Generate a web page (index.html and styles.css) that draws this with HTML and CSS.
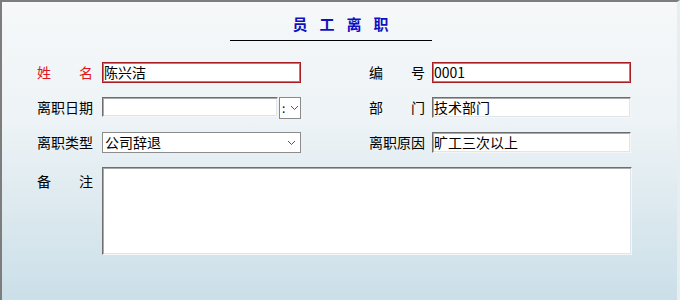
FILE: index.html
```html
<!DOCTYPE html>
<html lang="zh-CN">
<head>
    <meta charset="UTF-8">
    <title>员工离职</title>
    <link rel="stylesheet" href="styles.css">
</head>
<body>
    <div class="window">
        <div class="title">员工离职</div>
        <div class="title-line"></div>

        <div class="form">
            <div class="row">
                <div class="field field-left">
                    <label class="lbl must">姓名</label>
                    <div class="box box-red">陈兴洁</div>
                </div>
                <div class="field field-right">
                    <label class="lbl">编号</label>
                    <div class="box box-red">0001</div>
                </div>
            </div>

            <div class="row">
                <div class="field field-left">
                    <label class="lbl">离职日期</label>
                    <div class="box box-inset date-box"></div>
                    <div class="date-btn">
                        <span class="colon">:</span>
                        <svg width="9" height="6" viewBox="0 0 9 6"><path d="M1 1 L4.5 4.5 L8 1" fill="none" stroke="#555" stroke-width="1"/></svg>
                    </div>
                </div>
                <div class="field field-right">
                    <label class="lbl">部门</label>
                    <div class="box box-inset">技术部门</div>
                </div>
            </div>

            <div class="row">
                <div class="field field-left">
                    <label class="lbl">离职类型</label>
                    <div class="box box-select">
                        <span>公司辞退</span>
                        <svg width="9" height="6" viewBox="0 0 9 6"><path d="M1 1 L4.5 4.5 L8 1" fill="none" stroke="#555" stroke-width="1"/></svg>
                    </div>
                </div>
                <div class="field field-right">
                    <label class="lbl">离职原因</label>
                    <div class="box box-inset">旷工三次以上</div>
                </div>
            </div>

            <div class="row row-memo">
                <label class="lbl lbl-memo">备注</label>
                <div class="box box-inset memo"></div>
            </div>
        </div>
    </div>
</body>
</html>
```

FILE: styles.css
```css
* {
    margin: 0;
    padding: 0;
    box-sizing: border-box;
}

body {
    font-family: "Noto Sans CJK SC", "Liberation Sans", sans-serif;
    font-size: 14px;
    color: #000;
}

.window {
    width: 680px;
    height: 300px;
    border-top: 2px solid #7d7d7d;
    border-left: 2px solid #7d7d7d;
    border-right: 3px solid #e6eef1;
    background: linear-gradient(#f6f8f9 0%, #edf3f6 40%, #cbdfe8 100%);
}

.title {
    padding-top: 12px;
    padding-left: 14px;
    height: 32px;
    line-height: 20px;
    text-align: center;
    font-size: 15px;
    font-weight: bold;
    letter-spacing: 12px;
    color: #1010c0;
}

.title-line {
    width: 202px;
    height: 7px;
    margin-left: 228px;
    border-bottom: 1px solid #000;
}

.form {
    padding-top: 21px;
    padding-left: 35px;
}

.row {
    display: flex;
    height: 21px;
    margin-bottom: 14px;
}

.field {
    display: flex;
    align-items: flex-start;
    flex-shrink: 0;
}

.field-left {
    width: 264px;
}

.field-right {
    margin-left: 68px;
}

.lbl {
    flex-shrink: 0;
    width: 56px;
    line-height: 21px;
    white-space: nowrap;
    text-align: justify;
    text-align-last: justify;
    margin-right: 9px;
}

.field-right .lbl {
    margin-right: 7px;
}

.must {
    color: #e0141c;
}

.box {
    flex-shrink: 0;
    width: 199px;
    height: 21px;
    line-height: 19px;
    padding-left: 2px;
    background: #fff;
    white-space: nowrap;
}

.box-red {
    border: 1px solid #a81e24;
    box-shadow: inset 0 0 0 1px #dc6a6e;
    padding-left: 1px;
}

.box-inset {
    border: 1px solid;
    border-color: #6e6e6e #f4f6f7 #f4f6f7 #6e6e6e;
    box-shadow: inset 1px 1px 0 #a9a9a9, inset -1px -1px 0 #dfe5e8;
    padding-left: 1px;
}

.date-box {
    width: 176px;
    height: 20px;
}

.date-btn {
    flex-shrink: 0;
    display: flex;
    align-items: center;
    width: 22px;
    height: 22px;
    margin-left: 1px;
    border: 1px solid #8a8a8a;
    background: #fff;
}

.colon {
    width: 7px;
    font-size: 12px;
    line-height: 18px;
    padding-left: 2px;
}

.date-btn svg {
    margin-left: 3px;
}

.box-select {
    display: flex;
    align-items: center;
    justify-content: space-between;
    border: 1px solid #8c8c8c;
    padding-right: 4px;
}

.row-memo {
    height: 88px;
}

.lbl-memo {
    padding-top: 4px;
}

.memo {
    width: 530px;
    height: 88px;
}
```
